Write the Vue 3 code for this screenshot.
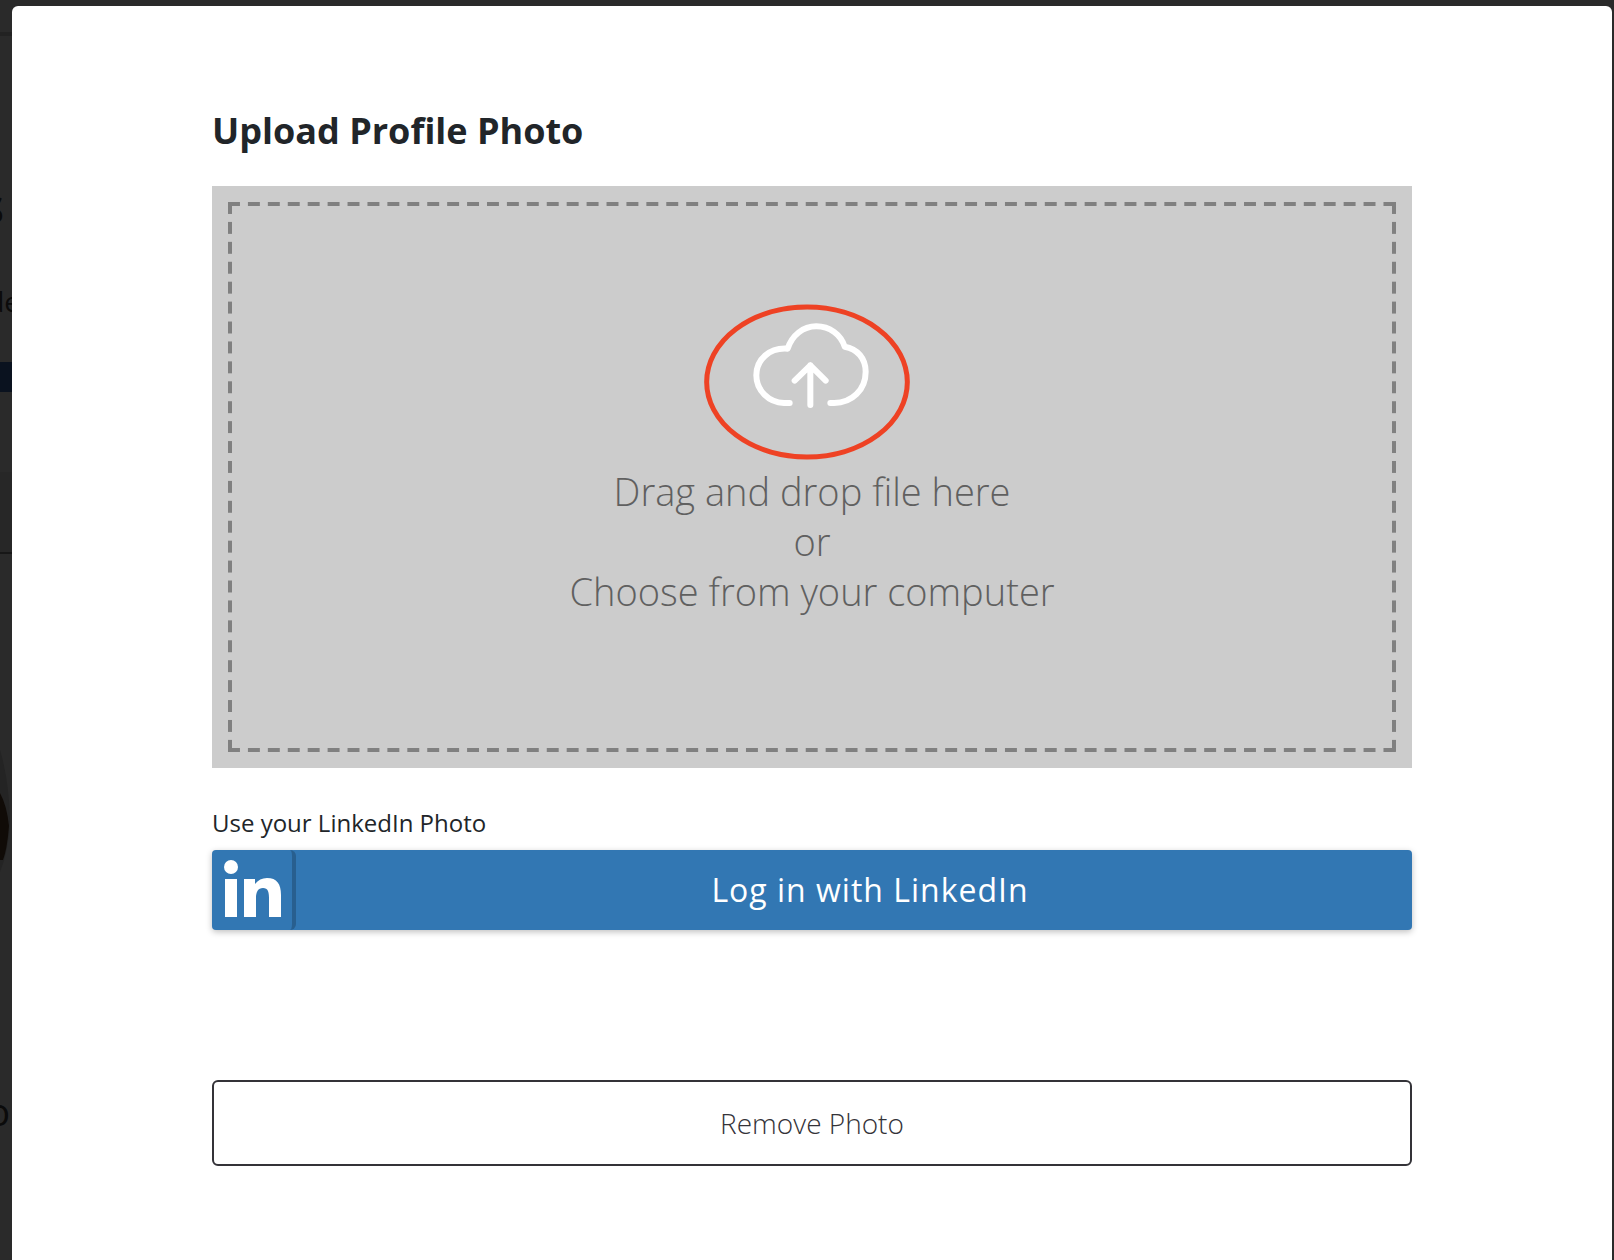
<script setup>
import { ref } from 'vue'

const fileInput = ref(null)
const dragging = ref(false)

function choose() {
  fileInput.value.click()
}
</script>

<template>
  <div class="backdrop">
    <svg class="page-edge" width="12" height="1260" viewBox="0 0 12 1260" aria-hidden="true">
      <rect y="32" width="12" height="4" fill="#222" />
      <text x="4" y="224" text-anchor="end" font-size="48" font-weight="600" fill="#0b0b0b">s</text>
      <text x="20" y="312" text-anchor="end" font-size="28" fill="#0b0b0b">de</text>
      <rect y="362" width="12" height="30" fill="#0a121f" />
      <rect y="472" width="12" height="80" fill="#272727" />
      <rect y="552" width="12" height="2" fill="#171717" />
      <path d="M0 750Q9 780 10 820Q9 850 0 872Z" fill="#242424" />
      <path d="M0 793Q7 806 9 826Q7 850 3 860H0Z" fill="#100b07" />
      <text x="10" y="1126" text-anchor="end" font-size="38" fill="#0b0b0b">o</text>
    </svg>

    <main class="modal" role="dialog" aria-modal="true" aria-labelledby="upload-title">
      <h1 id="upload-title">Upload Profile Photo</h1>

      <button
        type="button"
        class="dropzone"
        @click="choose"
        @dragover.prevent="dragging = true"
        @dragleave="dragging = false"
        @drop.prevent="dragging = false"
      >
        <span class="dashes">
          <svg class="cloud" viewBox="42 43 648 468" fill="none" aria-hidden="true">
            <ellipse cx="351" cy="277" rx="301" ry="225" stroke="#ee4224" stroke-width="15" />
            <g stroke="#fff" stroke-width="18" stroke-linecap="round" stroke-linejoin="round">
              <path d="M299 340H282C236 338 199 302 199 257C199 210 238 173 293 177C306 137 339 110 379 110C419 110 452 134 464 171C502 177 527 207 527 246C527 300 486 341 430 340H421" />
              <path d="M361 346V227M314 273L361 227L407 273" />
            </g>
          </svg>
          <span>Drag and drop file here</span>
          <span>or</span>
          <span>Choose from your computer</span>
        </span>
      </button>
      <input ref="fileInput" type="file" accept="image/*" aria-label="Profile photo" hidden />

      <p id="linkedin-label" class="label">Use your LinkedIn Photo</p>
      <button type="button" class="linkedin" aria-describedby="linkedin-label">
        <span class="linkedin-icon">
          <svg width="58" height="58" viewBox="0 0 58 58" fill="#fff" aria-hidden="true">
            <circle cx="7" cy="7" r="7" />
            <path d="M1 19H13V57H1ZM20 19H31V24C34 20 38 18 43 18C53 18 57 24 57 35V57H45V38C45 32 44 28 39 28C34 28 32 32 32 38V57H20Z" />
          </svg>
        </span>
        <span class="linkedin-text">Log in with LinkedIn</span>
      </button>

      <button type="button" class="remove">Remove Photo</button>
    </main>
  </div>
</template>

<style>
body {
  background: #2a2a2a;
}
</style>

<style scoped>
.backdrop {
  position: relative;
  display: flex;
  box-sizing: border-box;
  min-height: 100vh;
  padding: 6px 2px 0 12px;
  background: #2a2a2a;
  font-family: "Open Sans", "Noto Sans", sans-serif;
  color: #212529;
}

.page-edge {
  position: absolute;
  top: 0;
  left: 0;
}

.modal {
  flex: 1;
  box-sizing: border-box;
  padding: 100px 200px 94px;
  border-radius: 6px 6px 0 0;
  background: #fff;
}

h1 {
  margin: 0 0 30px;
  font-size: 36px;
  font-weight: 700;
  line-height: 50px;
}

button {
  display: block;
  box-sizing: border-box;
  width: 100%;
  margin: 0;
  padding: 0;
  border: 0;
  font-family: inherit;
  cursor: pointer;
}

.dropzone {
  padding: 16px;
  background: #ccc;
}

/* Each tile is a 12px dash and an 8px gap; every side starts and ends on a dash. */
.dashes {
  --across: linear-gradient(90deg, #808080 60%, transparent 60%);
  --down: linear-gradient(#808080 60%, transparent 60%);
  display: flex;
  flex-direction: column;
  align-items: center;
  box-sizing: border-box;
  min-height: 550px;
  padding: 102px 0;
  background:
    var(--across) 0 0 / calc((100% + 8px) / 59) 4px repeat-x,
    var(--across) 0 100% / calc((100% + 8px) / 59) 4px repeat-x,
    var(--down) 0 0 / 4px calc((100% + 8px) / 28) repeat-y,
    var(--down) 100% 0 / 4px calc((100% + 8px) / 28) repeat-y;
  color: #606060;
  font-size: 38px;
  font-weight: 300;
  line-height: 50px;
}

.cloud {
  width: 216px;
  height: 156px;
  margin-bottom: 6px;
}

.label {
  margin: 37px 0 9px;
  font-size: 24px;
  line-height: 36px;
}

.linkedin {
  display: flex;
  height: 80px;
  border-radius: 4px;
  background: #3277b3;
  box-shadow: 0 2px 6px rgba(0, 0, 0, 0.25);
  overflow: hidden;
  color: #fff;
}

.linkedin-icon {
  display: flex;
  align-items: center;
  box-sizing: border-box;
  width: 84px;
  height: 80px;
  padding: 0 0 2px 12px;
  border-right: 4px solid #285f8f;
  border-radius: 4px 6px 6px 4px;
}

.linkedin-text {
  flex: 1;
  padding-left: 32px;
  font-size: 32px;
  font-weight: 500;
  line-height: 80px;
  letter-spacing: 1px;
  text-align: center;
}

.remove {
  height: 86px;
  margin-top: 150px;
  border: 2px solid #343338;
  border-radius: 6px;
  background: #fff;
  color: #343338;
  font-size: 28px;
  font-weight: 300;
}
</style>
